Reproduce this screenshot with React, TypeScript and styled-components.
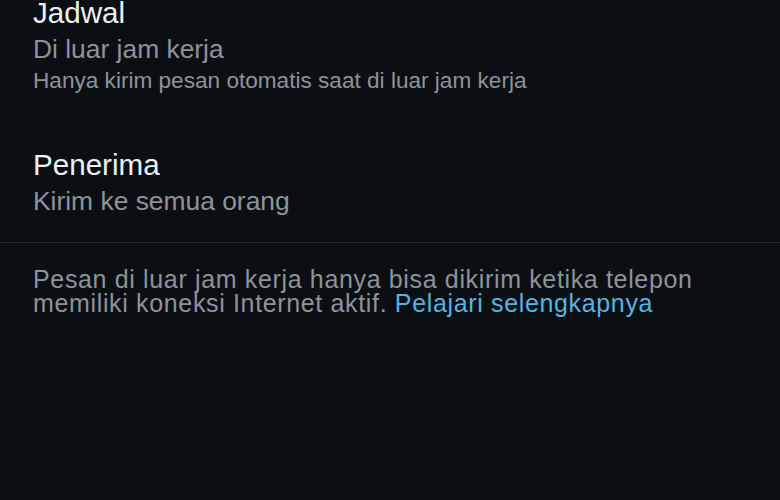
import React from "react";
import styled, { createGlobalStyle } from "styled-components";

const Global = createGlobalStyle`
  html, body { margin: 0; padding: 0; background: #0b0f14; }
  body { font-family: "Liberation Sans", Arial, sans-serif; }
`;

const Page = styled.div`
  width: 780px;
  height: 500px;
  background: #0b0f14;
  display: flex;
  flex-direction: column;
  overflow: hidden;
`;

const Section = styled.div<{ $pt: number; $pb: number }>`
  padding: ${(p) => p.$pt}px 33px ${(p) => p.$pb}px 33px;
  display: flex;
  flex-direction: column;
`;

const Title = styled.div`
  color: #eef1f2;
  font-size: 29.6px;
  line-height: 26px;
`;

const Primary = styled.div`
  color: #8c9499;
  font-size: 26.4px;
  line-height: 30px;
  margin-top: 8px;
`;

const Secondary = styled.div`
  color: #8c9499;
  font-size: 22.6px;
  line-height: 26px;
  margin-top: 4px;
`;

const Divider = styled.div`
  height: 1px;
  background: #23292e;
`;

const Footer = styled.p`
  margin: 0;
  padding: 24px 33px 0 33px;
  color: #8c9499;
  font-size: 25px;
  line-height: 24px;
  letter-spacing: 0.65px;
`;

const Link = styled.a`
  color: #55b4e0;
  text-decoration: none;
`;

export default function App() {
  return (
    <Page>
      <Global />
      <Section $pt={0} $pb={0}>
        <Title>Jadwal</Title>
        <Primary>Di luar jam kerja</Primary>
        <Secondary>Hanya kirim pesan otomatis saat di luar jam kerja</Secondary>
      </Section>
      <Section $pt={58} $pb={26}>
        <Title>Penerima</Title>
        <Primary>Kirim ke semua orang</Primary>
      </Section>
      <Divider />
      <Footer>
        Pesan di luar jam kerja hanya bisa dikirim ketika telepon memiliki koneksi Internet aktif.{" "}
        <Link>Pelajari selengkapnya</Link>
      </Footer>
    </Page>
  );
}
